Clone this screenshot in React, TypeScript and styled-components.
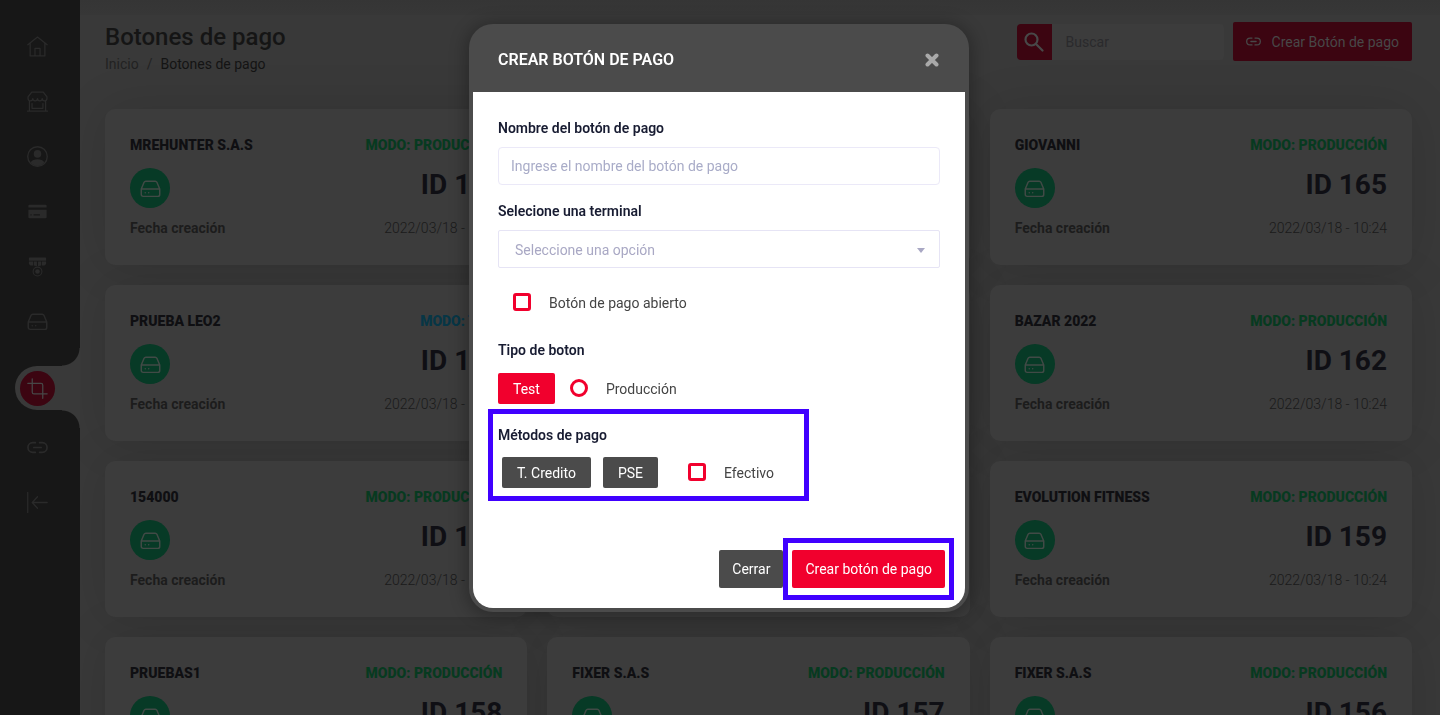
import React from "react";
import styled, { createGlobalStyle, css } from "styled-components";

const GlobalStyle = createGlobalStyle`
  *, *::before, *::after { box-sizing: border-box; }
  html, body { margin: 0; height: 100%; }
  body {
    overflow: hidden;
    background: #393939;
    color: #202020;
    font: 400 14px/20px Roboto, "Liberation Sans", sans-serif;
  }
  #root { height: 100%; }
  button, input, select { font: inherit; }
  button { cursor: pointer; }
`;

const Shell = styled.div`
  display: flex;
  height: 100vh;
  overflow: hidden;
`;

const Sidebar = styled.nav`
  position: relative;
  z-index: 1;
  flex: none;
  display: flex;
  flex-direction: column;
  width: 80px;
  padding-top: 19px;
  background: #171717;
`;

const NavItem = styled.a<{ $active?: boolean }>`
  position: relative;
  flex: none;
  display: flex;
  align-items: center;
  height: 55px;
  padding-left: 27px;
  color: #2a2a2a;
  ${(p) =>
    p.$active &&
    css`
      height: 44px;
      margin: 17px 0 10px 15px;
      padding-left: 5px;
      border-radius: 22px 0 0 22px;
      background: #393939;
      &::before,
      &::after {
        content: "";
        position: absolute;
        right: 0;
        width: 18px;
        height: 18px;
      }
      &::before {
        top: -18px;
        background: radial-gradient(circle at 0 0, #171717 17px, #393939 18px);
      }
      &::after {
        bottom: -18px;
        background: radial-gradient(circle at 0 100%, #171717 17px, #393939 18px);
      }
    `}
`;

const ActiveDisc = styled.span`
  display: grid;
  place-items: center;
  width: 35px;
  height: 35px;
  border-radius: 50%;
  background: #3c0511;
  color: #474747;
`;

const Main = styled.main`
  flex: 1;
  min-width: 0;
  padding: 22px 28px 0 25px;
  background: linear-gradient(#353535, #373737) 0 0 / 100% 15px no-repeat;
`;

const TopBar = styled.header`
  display: flex;
  justify-content: space-between;
  height: 87px;
`;

const PageTitle = styled.h1`
  margin: 0;
  font-size: 24px;
  line-height: 30px;
  font-weight: 500;
  color: #151515;
`;

const Crumbs = styled.div`
  display: flex;
  gap: 8px;
  line-height: 24px;
  color: #222;
`;

const Crumb = styled.a<{ $current?: boolean }>`
  color: ${(p) => (p.$current ? "#141414" : "#222")};
  text-decoration: none;
`;

const Tools = styled.div`
  display: flex;
  align-items: flex-start;
  gap: 9px;
`;

const Search = styled.form`
  display: flex;
  width: 207px;
  height: 36px;
  margin-top: 2px;
  border-radius: 4px;
  overflow: hidden;
  background: #3c3c3c;
`;

const SearchButton = styled.button`
  display: grid;
  place-items: center;
  flex: none;
  width: 35px;
  padding: 0;
  border: 0;
  background: #3c0511;
  color: #484848;
`;

const SearchInput = styled.input`
  flex: 1;
  min-width: 0;
  padding: 0 14px;
  border: 0;
  outline: 0;
  background: transparent;
  &::placeholder { color: #2a2a2c; opacity: 1; }
`;

const CreateButton = styled.button`
  display: flex;
  align-items: center;
  gap: 11px;
  height: 39px;
  padding: 0 13px;
  border: 0;
  border-radius: 2px;
  background: #3c0511;
  color: #484848;
`;

const Grid = styled.div`
  isolation: isolate;
  display: grid;
  grid-template-columns: repeat(3, 1fr);
  gap: 20px;
`;

const Card = styled.article`
  position: relative;
  display: flex;
  flex-direction: column;
  height: 156px;
  padding: 26px 25px 0;
  border-radius: 10px;
  background: #3c3c3c;
  &::before {
    content: "";
    position: absolute;
    z-index: -1;
    inset: 0;
    border-radius: 10px;
    box-shadow: 0 0 50px rgba(0, 0, 0, 0.12);
  }
`;

const CardRow = styled.div<{ $h: number }>`
  display: flex;
  justify-content: space-between;
  align-items: flex-start;
  height: ${(p) => p.$h}px;
`;

const CardName = styled.h2`
  margin: 0;
  font-size: 14px;
  line-height: 20px;
  font-weight: 900;
  color: #0f0f12;
`;

const Mode = styled.span<{ $test?: boolean }>`
  font-weight: 900;
  color: ${(p) => (p.$test ? "#073646" : "#073a20")};
`;

const Badge = styled.span`
  display: grid;
  place-items: center;
  width: 40px;
  height: 40px;
  margin-top: 7px;
  border-radius: 50%;
  background: #073a26;
  color: #414a46;
`;

const CardId = styled.strong`
  margin-top: 8px;
  font-size: 28px;
  line-height: 32px;
  font-weight: 700;
  color: #0f0f14;
`;

const DateLabel = styled.span`
  font-weight: 700;
  color: #1c1c1c;
`;

const DateValue = styled.time`
  font-weight: 300;
  color: #1a1a1a;
`;

const Layer = styled.div`
  position: fixed;
  z-index: 2;
  inset: 0;
  display: flex;
  justify-content: center;
  align-items: flex-start;
  padding-top: 24px;
`;

const Dialog = styled.section`
  width: 500px;
  margin-right: 2px;
  padding: 0 4px 4px;
  border-radius: 24px;
  background: #4b4b4b;
  box-shadow: 0 2px 16px 4px rgba(0, 0, 0, 0.25);
`;

const DialogHeader = styled.header`
  display: flex;
  align-items: center;
  justify-content: space-between;
  height: 68px;
  padding: 4px 25px 0;
`;

const DialogTitle = styled.h2`
  margin: 0;
  font-size: 16px;
  line-height: 24px;
  font-weight: 600;
  color: #fff;
`;

const CloseButton = styled.button`
  display: grid;
  place-items: center;
  width: 16px;
  height: 24px;
  padding: 0;
  border: 0;
  background: transparent;
  color: #a9a9a9;
`;

const DialogBody = styled.form`
  display: flex;
  flex-direction: column;
  padding: 26px 25px 20px;
  border-radius: 0 0 20px 20px;
  background: #fff;
`;

const labelText = css`
  margin: 0;
  padding: 0;
  font-size: 14px;
  line-height: 20px;
  font-weight: 600;
  color: #181c32;
`;

const FieldLabel = styled.label`
  ${labelText}
`;

const Legend = styled.legend`
  ${labelText}
`;

const TextInput = styled.input`
  height: 38px;
  margin: 9px 0 16px;
  padding: 0 12px;
  border: 1px solid #ebe9f8;
  border-radius: 4px;
  outline: 0;
  background: #fff;
  color: #4b4b4b;
  &::placeholder { color: #a9acc8; opacity: 1; }
`;

const SelectBox = styled.div`
  display: grid;
  align-items: center;
  margin: 9px 0 25px;
  > * { grid-area: 1 / 1; }
  > svg { justify-self: end; margin: 2px 15px 0 0; pointer-events: none; }
`;

const Select = styled.select`
  width: 100%;
  height: 38px;
  padding: 2px 16px 0;
  border: 1px solid #e6e4f5;
  border-radius: 2px;
  outline: 0;
  appearance: none;
  background: #fff;
  color: #a9a8c4;
`;

const Group = styled.fieldset`
  min-width: 0;
  margin: 0;
  padding: 0;
  border: 0;
`;

const Choice = styled.label<{ $inset?: boolean }>`
  display: flex;
  align-items: center;
  gap: 18px;
  padding-left: ${(p) => (p.$inset ? 15 : 0)}px;
  color: #444;
`;

const Tick = styled.input`
  flex: none;
  appearance: none;
  width: 18px;
  height: 18px;
  margin: 0 0 2px;
  border: 3px solid #f1002d;
  border-radius: ${(p) => (p.type === "radio" ? "50%" : "3px")};
  background: #fff;
`;

const Options = styled.div<{ $gap: number }>`
  display: flex;
  align-items: center;
  gap: ${(p) => p.$gap}px;
  margin-top: 13px;
`;

const Pill = styled.button<{ $red?: boolean }>`
  height: 31px;
  padding: 0 15px;
  border: 0;
  border-radius: 2px;
  background: ${(p) => (p.$red ? "#f1002d" : "#4b4b4b")};
  color: #fff;
`;

const TypeGroup = styled(Group)`
  margin-top: 27px;
`;

const MethodsGroup = styled(Group)`
  width: 321px;
  margin: 5px 0 0 -10px;
  padding: 11px 5px 8px;
  border: 5px solid #4000ff;
`;

const MethodOptions = styled(Options)`
  margin-top: 12px;
  padding-left: 4px;
`;

const MethodChoice = styled(Choice)`
  margin-left: 18px;
`;

const Actions = styled.footer`
  display: flex;
  justify-content: flex-end;
  align-items: center;
  margin: 37px -14px -12px 0;
`;

const ActionButton = styled.button<{ $red?: boolean }>`
  height: 38px;
  padding: 0 13px;
  border: 0;
  border-radius: 2px;
  background: ${(p) => (p.$red ? "#f1002d" : "#4b4b4b")};
  color: #fff;
`;

const SubmitFrame = styled.div`
  padding: 7px 4px;
  border: 5px solid #4000ff;
`;

type IconProps = { children: React.ReactNode; size?: number; width?: number };

const Icon = ({ children, size = 21, width = 1 }: IconProps) => (
  <svg
    width={size}
    height={size}
    viewBox="0 0 20 20"
    fill="none"
    stroke="currentColor"
    strokeWidth={width}
    strokeLinecap="round"
    strokeLinejoin="round"
    aria-hidden="true"
  >
    {children}
  </svg>
);

const HomeIcon = () => (
  <Icon width={1.2}>
    <path d="M.8 8.3 10 1l9.2 7.3M3 6.8V19h14V6.8M7.6 19v-7.2h4.8V19" />
  </Icon>
);

const StoreIcon = () => (
  <Icon width={1.2}>
    <path d="M4.500 1h11l3.500 4.6v1.600a2.250 2.250 0 0 1-4.500 0 2.250 2.250 0 0 1-4.500 0 2.250 2.250 0 0 1-4.500 0 2.250 2.250 0 0 1-4.500 0V5.600zM2.300 9.500V19M17.700 9.500V19M.5 19.200h19M4.800 12v4.500h10.400V12" />
  </Icon>
);

const UserIcon = () => (
  <Icon width={1.3}>
    <circle cx="10" cy="10" r="9.300" />
    <circle cx="10" cy="7.500" r="3.600" fill="currentColor" stroke="none" />
    <path d="M3.500 15.600c2-4 11-4 13 0A9 9 0 0 1 10 19a9 9 0 0 1-6.500-3.400z" fill="currentColor" stroke="none" />
  </Icon>
);

const CardIcon = () => (
  <Icon>
    <path d="M1.300 4.500a1 1 0 0 1 1-1h15.400a1 1 0 0 1 1 1v1.800H1.300z" fill="currentColor" stroke="none" />
    <path
      d="M1.300 8.300h17.400v7.200a1 1 0 0 1-1 1H2.300a1 1 0 0 1-1-1zm2 4.400v1h1v-1zm3 0v1h6v-1z"
      fill="currentColor"
      fillRule="evenodd"
      stroke="none"
    />
  </Icon>
);

const MedalIcon = () => (
  <Icon>
    <path
      d="M2.500 1.500h15a.7.7 0 0 1 .7.7v2.300H1.800V2.200a.7.7 0 0 1 .7-.7zM1.800 5.300h4V9H3.300L1.800 7.500zM6.500 5.300h3v4.500L6.500 9zM10.500 5.300h3V9l-3 .8zM14.200 5.300h4v2.200L16.700 9h-2.500z"
      fill="currentColor"
      stroke="none"
    />
    <circle cx="10" cy="14.800" r="4.200" />
    <circle cx="10" cy="14.800" r="2.200" fill="currentColor" stroke="none" />
  </Icon>
);

const DriveIcon = ({ width = 1.4 }: { width?: number }) => (
  <Icon width={width}>
    <path d="M5.500 3h9c.8 0 1.300.4 1.600 1.100l2.700 6.400v5.200c0 1-.7 1.800-1.700 1.800H2.900c-1 0-1.700-.8-1.700-1.800v-5.200l2.700-6.400C4.200 3.400 4.700 3 5.500 3zM1.200 10.500h17.600" />
    <path d="M5 14v.1M8.300 14v.1" />
  </Icon>
);

const CropIcon = () => (
  <Icon width={1.2}>
    <path d="M5 .8v12.700c0 1 .6 1.600 1.600 1.600h12.600M.8 5.200h12.600c1 0 1.600.6 1.600 1.600v12.500" />
  </Icon>
);

const LinkIcon = ({ size = 21, width = 1.6 }: { size?: number; width?: number }) => (
  <Icon size={size} width={width}>
    <path d="M8 5.400H5.500a4.600 4.600 0 0 0 0 9.200H8M12 5.400h2.500a4.600 4.600 0 0 1 0 9.200H12M6.500 10h7" />
  </Icon>
);

const CollapseIcon = () => (
  <Icon width={1.2}>
    <path d="M.7.500v19M19.200 10H5.500M10 4.500 5 10l5 5.500" />
  </Icon>
);

type CardData = { name: string; id: string; test?: boolean };

const cards: CardData[] = [
  { name: "MREHUNTER S.A.S", id: "167" },
  { name: "COMERCIO", id: "166" },
  { name: "GIOVANNI", id: "165" },
  { name: "PRUEBA LEO2", id: "164", test: true },
  { name: "PRUEBA LEO", id: "163" },
  { name: "BAZAR 2022", id: "162" },
  { name: "154000", id: "161" },
  { name: "EVOLUTION", id: "160" },
  { name: "EVOLUTION FITNESS", id: "159" },
  { name: "PRUEBAS1", id: "158" },
  { name: "FIXER S.A.S", id: "157" },
  { name: "FIXER S.A.S", id: "156" },
];

const PaymentCard = ({ name, id, test }: CardData) => (
  <Card>
    <CardRow $h={26}>
      <CardName>{name}</CardName>
      <Mode $test={test}>{test ? "MODO: TEST" : "MODO: PRODUCCIÓN"}</Mode>
    </CardRow>
    <CardRow $h={57}>
      <Badge>
        <DriveIcon />
      </Badge>
      <CardId>ID {id}</CardId>
    </CardRow>
    <CardRow $h={20}>
      <DateLabel>Fecha creación</DateLabel>
      <DateValue>2022/03/18 - 10:24</DateValue>
    </CardRow>
  </Card>
);

const CreateDialog = () => (
  <Layer>
    <Dialog role="dialog" aria-modal="true" aria-labelledby="dialog-title">
      <DialogHeader>
        <DialogTitle id="dialog-title">CREAR BOTÓN DE PAGO</DialogTitle>
        <CloseButton type="button" aria-label="Cerrar ventana">
          <svg width="14" height="14" viewBox="0 0 14 14" stroke="currentColor" strokeWidth="4" strokeLinecap="round">
            <path d="m2.500 2.500 9 9M11.500 2.500l-9 9" />
          </svg>
        </CloseButton>
      </DialogHeader>
      <DialogBody onSubmit={(e) => e.preventDefault()}>
        <FieldLabel htmlFor="name">Nombre del botón de pago</FieldLabel>
        <TextInput id="name" placeholder="Ingrese el nombre del botón de pago" />
        <FieldLabel htmlFor="terminal">Selecione una terminal</FieldLabel>
        <SelectBox>
          <Select id="terminal">
            <option>Seleccione una opción</option>
          </Select>
          <svg width="8" height="5" viewBox="0 0 8 5" fill="#a9a8c4" aria-hidden="true">
            <path d="M0 0h8L4 5z" />
          </svg>
        </SelectBox>
        <Choice $inset>
          <Tick type="checkbox" />
          Botón de pago abierto
        </Choice>
        <TypeGroup>
          <Legend>Tipo de boton</Legend>
          <Options $gap={15}>
            <Pill type="button" $red>Test</Pill>
            <Choice>
              <Tick type="radio" name="type" />
              Producción
            </Choice>
          </Options>
        </TypeGroup>
        <MethodsGroup aria-labelledby="methods">
          <FieldLabel as="div" id="methods">Métodos de pago</FieldLabel>
          <MethodOptions $gap={12}>
            <Pill type="button">T. Credito</Pill>
            <Pill type="button">PSE</Pill>
            <MethodChoice>
              <Tick type="checkbox" />
              Efectivo
            </MethodChoice>
          </MethodOptions>
        </MethodsGroup>
        <Actions>
          <ActionButton type="button">Cerrar</ActionButton>
          <SubmitFrame>
            <ActionButton type="submit" $red>Crear botón de pago</ActionButton>
          </SubmitFrame>
        </Actions>
      </DialogBody>
    </Dialog>
  </Layer>
);

const App = () => (
  <>
    <GlobalStyle />
    <Shell>
      <Sidebar>
        <NavItem href="#inicio" aria-label="Inicio"><HomeIcon /></NavItem>
        <NavItem href="#comercios" aria-label="Comercios"><StoreIcon /></NavItem>
        <NavItem href="#usuarios" aria-label="Usuarios"><UserIcon /></NavItem>
        <NavItem href="#tarjetas" aria-label="Tarjetas"><CardIcon /></NavItem>
        <NavItem href="#logros" aria-label="Logros"><MedalIcon /></NavItem>
        <NavItem href="#terminales" aria-label="Terminales"><DriveIcon /></NavItem>
        <NavItem href="#botones" aria-label="Botones de pago" $active>
          <ActiveDisc><CropIcon /></ActiveDisc>
        </NavItem>
        <NavItem href="#enlaces" aria-label="Enlaces"><LinkIcon /></NavItem>
        <NavItem href="#contraer" aria-label="Contraer"><CollapseIcon /></NavItem>
      </Sidebar>
      <Main>
        <TopBar>
          <div>
            <PageTitle>Botones de pago</PageTitle>
            <Crumbs>
              <Crumb href="#inicio">Inicio</Crumb>
              <span>/</span>
              <Crumb href="#botones" $current>Botones de pago</Crumb>
            </Crumbs>
          </div>
          <Tools>
            <Search role="search" onSubmit={(e) => e.preventDefault()}>
              <SearchButton type="submit" aria-label="Buscar">
                <Icon size={20} width={2.2}>
                  <circle cx="7.500" cy="7.500" r="6" />
                  <path d="m12.200 12.200 6.300 6.300" />
                </Icon>
              </SearchButton>
              <SearchInput placeholder="Buscar" aria-label="Buscar" />
            </Search>
            <CreateButton type="button">
              <LinkIcon size={15} width={1.7} />
              Crear Botón de pago
            </CreateButton>
          </Tools>
        </TopBar>
        <Grid>
          {cards.map((c) => (
            <PaymentCard key={c.id} {...c} />
          ))}
        </Grid>
      </Main>
    </Shell>
    <CreateDialog />
  </>
);

export default App;
